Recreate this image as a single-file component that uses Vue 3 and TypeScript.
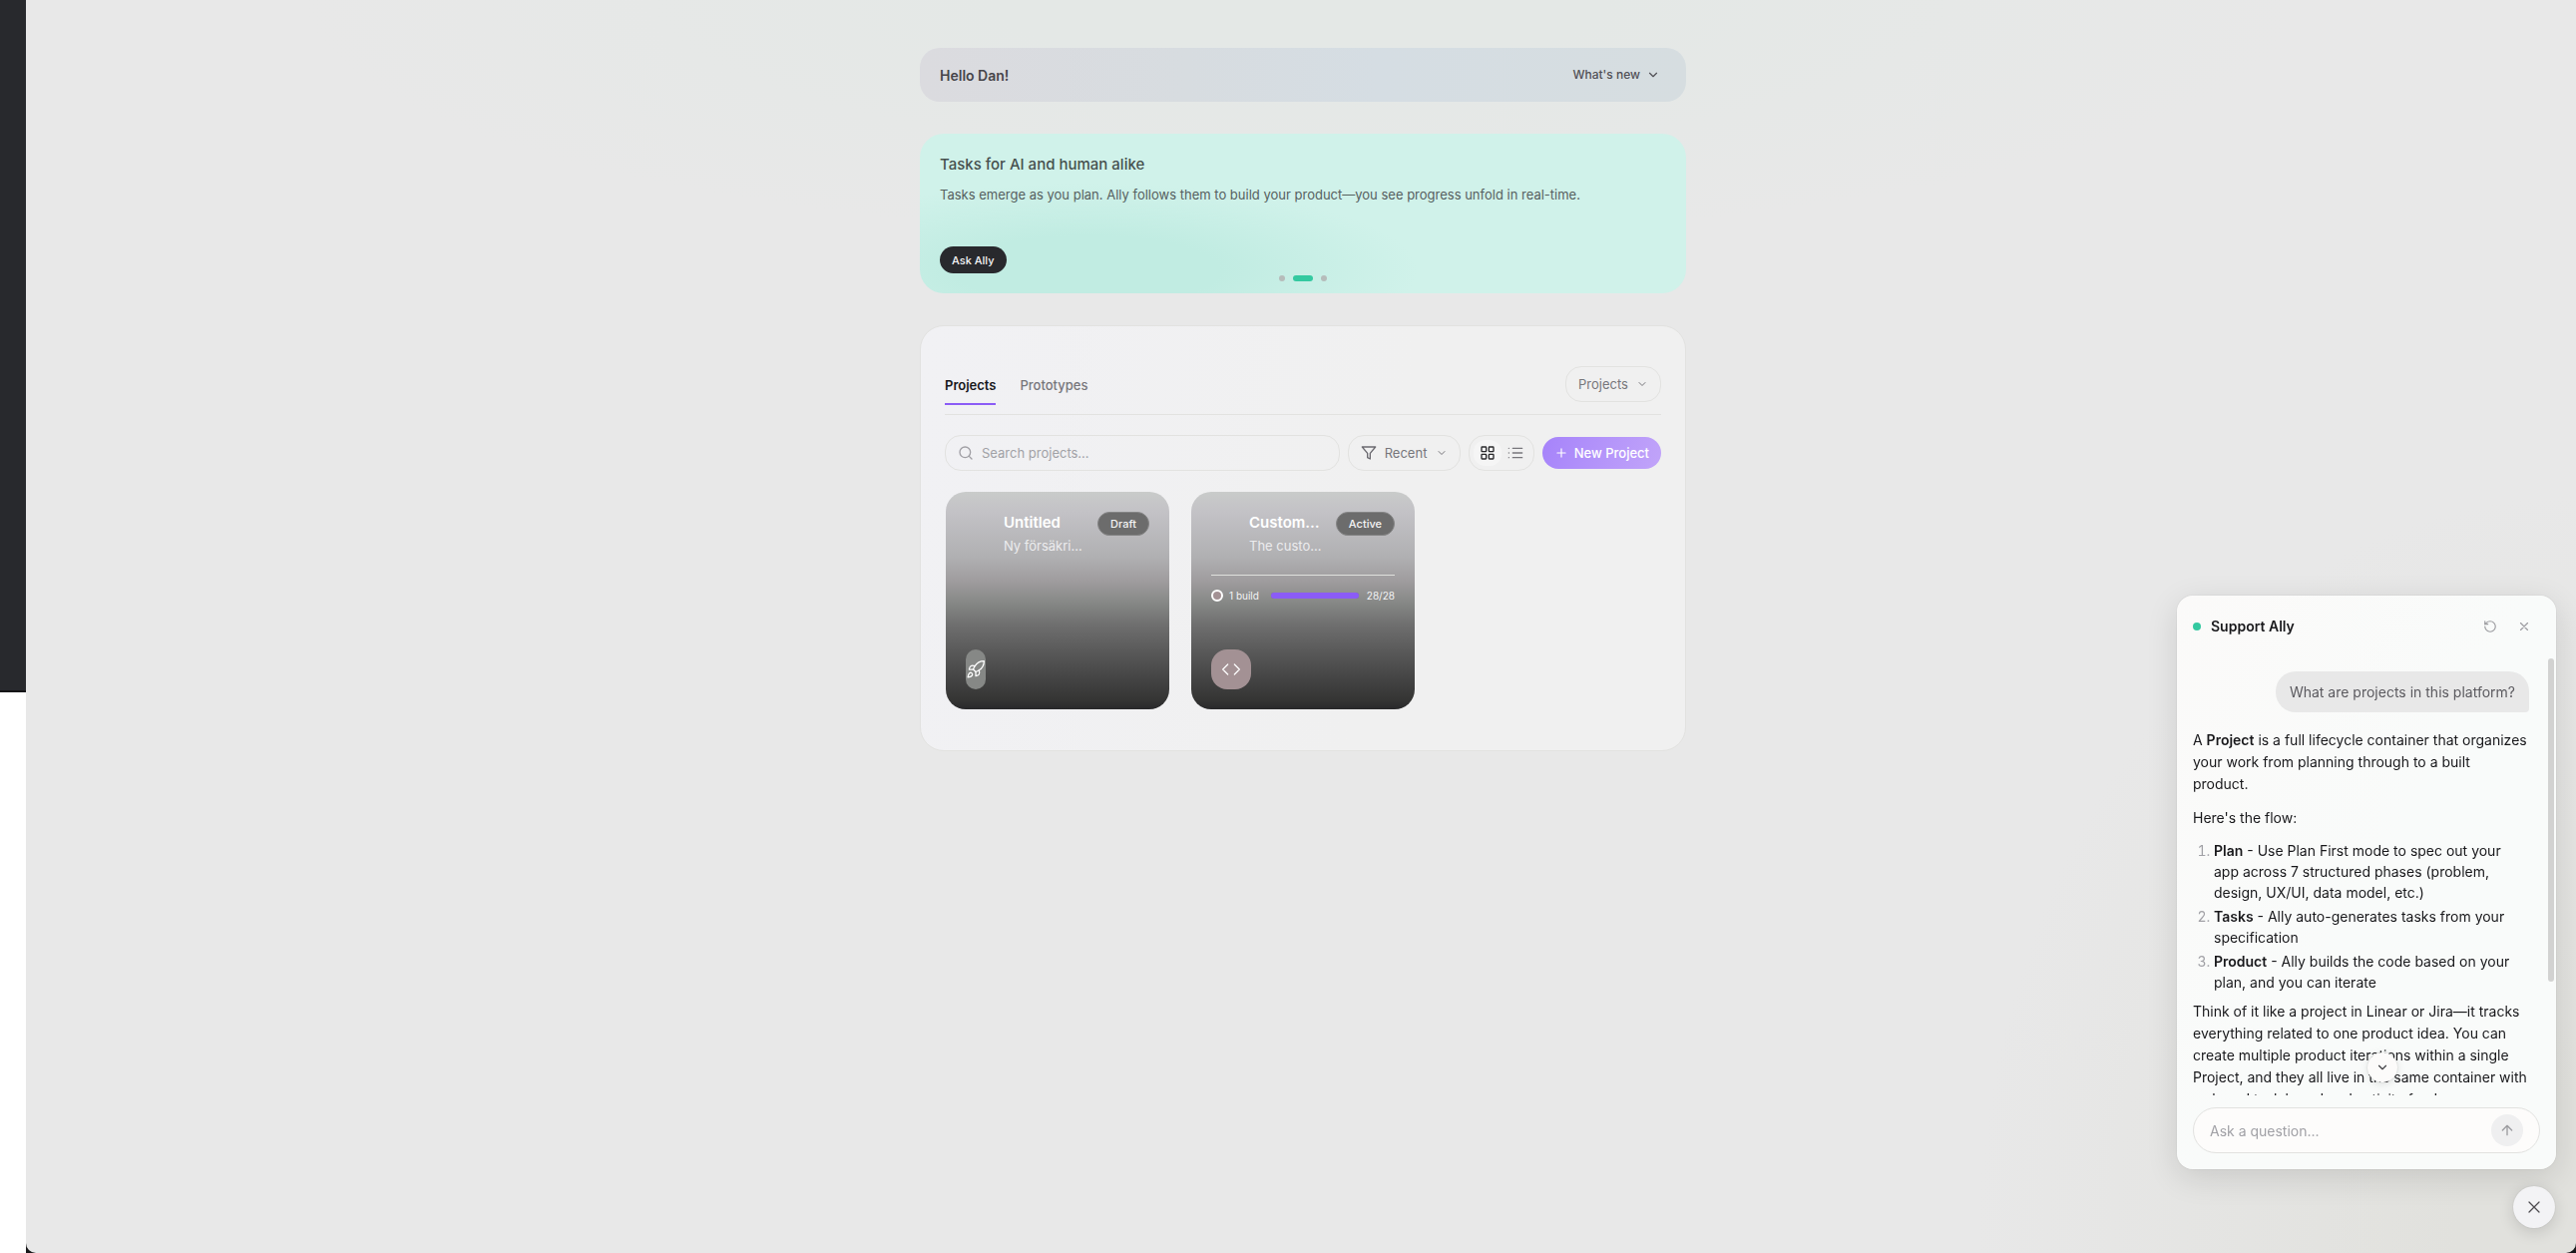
<script setup lang="ts">
import { ref } from 'vue'

interface Project {
  title: string
  summary: string
  status: string
  icon: 'rocket' | 'code'
  builds?: string
  done?: number
  total?: number
}

const projects: Project[] = [
  { title: 'Untitled', summary: 'Ny försäkring', status: 'Draft', icon: 'rocket' },
  {
    title: 'Customer portal',
    summary: 'The customer portal',
    status: 'Active',
    icon: 'code',
    builds: '1 build',
    done: 28,
    total: 28,
  },
]

const steps = [
  { name: 'Plan', text: 'Use Plan First mode to spec out your app across 7 structured phases (problem, design, UX/UI, data model, etc.)' },
  { name: 'Tasks', text: 'Ally auto-generates tasks from your specification' },
  { name: 'Product', text: 'Ally builds the code based on your plan, and you can iterate' },
]

const search = ref('')
const question = ref('')
const slide = ref(1)
</script>

<template>
  <div class="shell">
    <aside class="rail"><div class="rail-dark"></div></aside>
    <div class="frame">
      <main class="main">
        <div class="column">
          <header class="hello">
            <h1>Hello Dan!</h1>
            <button type="button" class="whats-new">
              What's new
              <svg class="i14" viewBox="0 0 24 24"><path d="m6 9 6 6 6-6" /></svg>
            </button>
          </header>

          <section class="banner">
            <h2>Tasks for AI and human alike</h2>
            <p>Tasks emerge as you plan. Ally follows them to build your product—you see progress unfold in real-time.</p>
            <button type="button" class="ask">Ask Ally</button>
            <div class="dots">
              <button
                v-for="n in 3"
                :key="n"
                type="button"
                class="dot"
                :class="{ on: slide === n - 1 }"
                :aria-label="`Slide ${n}`"
                @click="slide = n - 1"
              ></button>
            </div>
          </section>

          <section class="panel">
            <div class="tabs-row">
              <nav class="tabs">
                <button type="button" class="tab active">Projects</button>
                <button type="button" class="tab">Prototypes</button>
              </nav>
              <div class="pick kind">
                <select aria-label="Item kind">
                  <option>Projects</option>
                </select>
                <svg class="i12" viewBox="0 0 24 24"><path d="m6 9 6 6 6-6" /></svg>
              </div>
            </div>

            <div class="tools">
              <label class="search">
                <svg class="i16" viewBox="0 0 24 24"><circle cx="11" cy="11" r="8" /><path d="m21 21-4.3-4.3" /></svg>
                <input v-model="search" type="text" placeholder="Search projects..." aria-label="Search projects" />
              </label>
              <div class="pick sort">
                <svg class="i16 funnel" viewBox="0 0 24 24"><path d="M22 3H2l8 9.46V19l4 2v-8.54L22 3z" /></svg>
                <select aria-label="Sort order">
                  <option>Recent</option>
                </select>
                <svg class="i12" viewBox="0 0 24 24"><path d="m6 9 6 6 6-6" /></svg>
              </div>
              <div class="view">
                <button type="button" class="on" aria-label="Grid view">
                  <svg class="i16" viewBox="0 0 24 24">
                    <rect x="3" y="3" width="7" height="7" rx="1" /><rect x="14" y="3" width="7" height="7" rx="1" />
                    <rect x="14" y="14" width="7" height="7" rx="1" /><rect x="3" y="14" width="7" height="7" rx="1" />
                  </svg>
                </button>
                <button type="button" aria-label="List view">
                  <svg class="i16" viewBox="0 0 24 24">
                    <path d="M8 5h14M8 12h14M8 19h14M2 5h.01M2 12h.01M2 19h.01" />
                  </svg>
                </button>
              </div>
              <button type="button" class="new">
                <svg class="i14" viewBox="0 0 24 24"><path d="M5 12h14M12 5v14" /></svg>
                New Project
              </button>
            </div>

            <div class="grid">
              <article v-for="p in projects" :key="p.title" class="card">
                <div class="card-top">
                  <div class="card-text">
                    <h3>{{ p.title }}</h3>
                    <p>{{ p.summary }}</p>
                  </div>
                  <span class="status">{{ p.status }}</span>
                </div>
                <div v-if="p.total && p.done" class="progress">
                  <span class="ring"></span>
                  <span>{{ p.builds }}</span>
                  <span class="bar"><span :style="{ width: (p.done / p.total) * 100 + '%' }"></span></span>
                  <span>{{ p.done }}/{{ p.total }}</span>
                </div>
                <div class="badge" :class="p.icon">
                  <svg v-if="p.icon === 'rocket'" class="i20" viewBox="0 0 24 24">
                    <path d="M4.5 16.5c-1.5 1.26-2 5-2 5s3.74-.5 5-2c.71-.84.7-2.13-.09-2.91a2.18 2.18 0 0 0-2.91-.09z" />
                    <path d="m12 15-3-3a22 22 0 0 1 2-3.95A12.88 12.88 0 0 1 22 2c0 2.72-.78 7.5-6 11a22.35 22.35 0 0 1-4 2z" />
                    <path d="M9 12H4s.55-3.03 2-4c1.62-1.08 5 0 5 0" />
                    <path d="M12 15v5s3.03-.55 4-2c1.08-1.62 0-5 0-5" />
                  </svg>
                  <svg v-else class="i20" viewBox="0 0 24 24"><path d="m16 18 6-6-6-6M8 6l-6 6 6 6" /></svg>
                </div>
              </article>
            </div>
          </section>
        </div>
      </main>
    </div>

    <section class="chat" aria-label="Support Ally">
      <header class="chat-head">
        <span class="online"></span>
        <h2>Support Ally</h2>
        <button type="button" aria-label="Restart conversation">
          <svg class="i14" viewBox="0 0 24 24"><path d="M3 12a9 9 0 1 0 9-9 9.75 9.75 0 0 0-6.74 2.74L3 8" /><path d="M3 3v5h5" /></svg>
        </button>
        <button type="button" aria-label="Close">
          <svg class="i14" viewBox="0 0 24 24"><path d="M18 6 6 18M6 6l12 12" /></svg>
        </button>
      </header>
      <div class="log-wrap">
        <div class="log">
          <p class="bubble">What are projects in this platform?</p>
          <p>A <strong>Project</strong> is a full lifecycle container that organizes your work from planning through to a built product.</p>
          <p>Here's the flow:</p>
          <ol>
            <li v-for="s in steps" :key="s.name"><strong>{{ s.name }}</strong> - {{ s.text }}</li>
          </ol>
          <p>
            Think of it like a project in Linear or Jira—it tracks everything related to one product idea. You can create
            multiple product iterations within a single Project, and they all live in the same container with a shared task
            board and activity feed.
          </p>
        </div>
        <span class="thumb"></span>
        <button type="button" class="down" aria-label="Scroll to latest">
          <svg class="i14" viewBox="0 0 24 24"><path d="m6 9 6 6 6-6" /></svg>
        </button>
      </div>
      <form class="compose" @submit.prevent>
        <input v-model="question" type="text" placeholder="Ask a question..." aria-label="Ask a question" />
        <button type="submit" aria-label="Send">
          <svg class="i16" viewBox="0 0 24 24"><path d="m5 12 7-7 7 7M12 19V5" /></svg>
        </button>
      </form>
    </section>

    <button type="button" class="fab" aria-label="Close support">
      <svg class="i20" viewBox="0 0 24 24"><path d="M18 6 6 18M6 6l12 12" /></svg>
    </button>
  </div>
</template>

<style>
body {
  margin: 0;
  background: #fff;
}
</style>

<style scoped>
* {
  box-sizing: border-box;
}
.shell {
  display: flex;
  min-height: 100vh;
  font-family: Inter, 'Liberation Sans', sans-serif;
  font-size: 14px;
  color: #18181b;
}
h1, h2, h3, p, ol {
  margin: 0;
}
button, input, select {
  font: inherit;
  color: inherit;
  border: 0;
  margin: 0;
  padding: 0;
  background: none;
  outline: none;
}
button {
  display: inline-flex;
  align-items: center;
  justify-content: center;
  cursor: pointer;
}
svg {
  flex: none;
  fill: none;
  stroke: currentColor;
  stroke-width: 2;
  stroke-linecap: round;
  stroke-linejoin: round;
}
.i12 { width: 12px; height: 12px; }
.i14 { width: 14px; height: 14px; }
.i16 { width: 16px; height: 16px; }
.i20 { width: 20px; height: 20px; }

.rail {
  width: 26px;
  flex: none;
}
.rail-dark {
  height: 694px;
  background: #28292d;
  border-bottom: 2px solid #151517;
}
.frame {
  flex: 1;
  display: flex;
  background: #18181a;
}
.main {
  flex: 1;
  padding: 48px 0 32px 4px;
  border-radius: 0 0 10px 10px;
  background:
    radial-gradient(ellipse 1000px 240px at 50% 0, #e4e8e6 30%, transparent),
    radial-gradient(ellipse 600px 760px at 100% 100%, #e1e1dd 20%, transparent),
    #e8e8e8;
}
.column {
  width: 100%;
  max-width: 768px;
  margin: 0 auto;
  display: flex;
  flex-direction: column;
  gap: 32px;
}

.hello {
  height: 54px;
  padding: 0 20px;
  display: flex;
  align-items: center;
  justify-content: space-between;
  border-radius: 20px;
  background: linear-gradient(90deg, #dbdbdf, #d7dce0 35%, #d5dde3 60%, #d6dde0);
}
.hello h1 {
  padding-top: 2px;
  font-size: 14px;
  line-height: 20px;
  font-weight: 600;
  color: #46454a;
}
.whats-new {
  gap: 6px;
  padding: 0 6px;
  font-size: 12px;
  line-height: 16px;
  font-weight: 500;
  color: #515056;
}

.banner {
  position: relative;
  height: 160px;
  padding: 20px;
  display: flex;
  flex-direction: column;
  align-items: flex-start;
  border-radius: 24px;
  background: radial-gradient(ellipse 330px 88px at 22% 86%, #c1ece2 40%, #d0f2ea);
}
.banner h2 {
  font-size: 15px;
  line-height: 22px;
  font-weight: 500;
  color: #46504e;
}
.banner p {
  margin-top: 8px;
  font-size: 13px;
  line-height: 22px;
  color: #56605f;
}
.ask {
  margin-top: auto;
  height: 27px;
  padding: 0 12px;
  border-radius: 14px;
  background: #28292d;
  color: #f4f4f5;
  font-size: 11px;
  font-weight: 500;
}
.dots {
  position: absolute;
  left: 0;
  right: 0;
  bottom: 12px;
  display: flex;
  justify-content: center;
  gap: 8px;
}
.dot {
  width: 6px;
  height: 6px;
  border-radius: 3px;
  background: #b6bcba;
}
.dot.on {
  width: 20px;
  background: #34c9a0;
}

.panel {
  padding: 40px 24px 41px;
  border: 1px solid #e2e2e0;
  border-radius: 24px;
  background: linear-gradient(100deg, #f1f1f4, #f0f0f0 60%);
}
.tabs-row {
  display: flex;
  justify-content: space-between;
  height: 49px;
  border-bottom: 1px solid #e2e2e0;
}
.tabs {
  display: flex;
  gap: 24px;
}
.tab {
  height: 39px;
  border-bottom: 2px solid transparent;
  font-size: 13px;
  font-weight: 500;
  color: #77767b;
}
.tab.active {
  color: #18181b;
  font-weight: 600;
  border-color: #8b5cf6;
}
.pick {
  height: 36px;
  padding: 0 12px;
  display: flex;
  align-items: center;
  gap: 8px;
  border: 1px solid #e2e2e0;
  border-radius: 16px;
  font-size: 13px;
  color: #77767b;
}
.pick select {
  appearance: none;
}
.funnel {
  color: #6b6a70;
}
.tools {
  display: flex;
  align-items: center;
  gap: 8px;
  margin-top: 20px;
}
.search {
  flex: 1;
  height: 36px;
  padding: 0 12px;
  display: flex;
  align-items: center;
  gap: 8px;
  border: 1px solid #e2e2e0;
  border-radius: 16px;
  color: #a09fa4;
}
.search input {
  flex: 1;
  min-width: 0;
  font-size: 13px;
}
::placeholder {
  color: #a1a1a6;
  opacity: 1;
}
.view {
  height: 36px;
  padding: 4px;
  display: flex;
  border: 1px solid #e2e2e0;
  border-radius: 16px;
  color: #77767b;
}
.view button {
  width: 28px;
  border-radius: 12px;
}
.view .on {
  background: #f5f5f5;
  color: #28282b;
}
.new {
  height: 32px;
  padding: 0 12px;
  gap: 6px;
  border-radius: 16px;
  background: linear-gradient(110deg, #a683fa, #b191fa 40%, #c1a4f9);
  color: #fff;
  font-size: 13px;
  font-weight: 500;
}

.grid {
  margin-top: 21px;
  display: grid;
  grid-template-columns: repeat(3, minmax(0, 1fr));
  gap: 20px;
}
.card {
  height: 218px;
  margin: 0 1px;
  padding: 20px;
  display: flex;
  flex-direction: column;
  border-radius: 20px;
  color: #f4f4f5;
  background: linear-gradient(#c9cbca, #c3c2c6 9%, #b0b0b2 30%, #9f9c9e 41%, #868886 51%, #6f6f6f 61%, #585858 74%, #444 86%, #343433 96%, #28282a);
}
.card-top {
  display: flex;
  align-items: flex-start;
  gap: 14px;
  padding-left: 38px;
}
.card-text {
  flex: 1;
  min-width: 0;
}
.card h3, .card p {
  overflow: hidden;
  white-space: nowrap;
  text-overflow: ellipsis;
}
.card h3 {
  font-size: 15px;
  line-height: 22px;
  font-weight: 600;
  color: #fff;
}
.card p {
  margin-top: 2px;
  font-size: 13px;
  line-height: 20px;
  color: #ececee;
}
.status {
  height: 24px;
  padding: 0 12px;
  border: 1px solid #858585;
  border-radius: 12px;
  background: #6c6c6c;
  font-size: 11px;
  line-height: 22px;
  font-weight: 500;
}
.progress {
  margin-top: 19px;
  padding-top: 12px;
  display: flex;
  align-items: center;
  border-top: 1px solid #dfe0dc;
  font-size: 10px;
  line-height: 16px;
}
.ring {
  width: 12px;
  height: 12px;
  margin-right: 6px;
  border: 2px solid #fff;
  border-radius: 50%;
  background: #a39194;
}
.bar {
  flex: 1;
  height: 6px;
  margin: 0 8px 0 12px;
  border-radius: 3px;
  background: #777;
}
.bar span {
  display: block;
  height: 100%;
  border-radius: 3px;
  background: #8b5cf6;
}
.badge {
  width: 40px;
  height: 40px;
  margin-top: auto;
  display: flex;
  align-items: center;
  justify-content: center;
  border-radius: 16px;
  background: #a39194;
  color: #fff;
}
.badge svg {
  stroke-width: 1.5;
}
.badge.rocket {
  width: 20px;
  border-radius: 10px;
  background: #868886;
}

.chat {
  position: fixed;
  right: 20px;
  bottom: 84px;
  width: 380px;
  height: 575px;
  display: flex;
  flex-direction: column;
  border-radius: 16px;
  background: linear-gradient(120deg, #fbfaf9, #f9fbfa 50%);
  box-shadow: 0 8px 32px rgba(0, 0, 0, 0.12), 0 0 2px rgba(0, 0, 0, 0.12);
}
.chat-head {
  height: 62px;
  padding: 0 20px 0 16px;
  display: flex;
  align-items: center;
}
.online {
  width: 8px;
  height: 8px;
  border-radius: 50%;
  background: #34c9a0;
}
.chat-head h2 {
  flex: 1;
  margin-left: 10px;
  font-size: 14px;
  line-height: 20px;
  font-weight: 600;
}
.chat-head button {
  width: 24px;
  height: 24px;
  margin-left: 10px;
  color: #9b9b9f;
}
.log-wrap {
  position: relative;
  flex: 1;
  min-height: 0;
}
.log {
  height: 100%;
  padding: 14px 27px 0 16px;
  overflow: hidden;
  font-size: 14px;
  line-height: 22px;
}
.log p + p {
  margin-top: 12px;
}
.log .bubble {
  width: fit-content;
  margin: 0 0 17px auto;
  padding: 10px 14px;
  border-radius: 20px 20px 4px 20px;
  background: #e8e8e8;
  line-height: 21px;
  color: #5b5a5f;
}
.log strong {
  font-weight: 600;
}
.log .bubble + p {
  margin-top: 0;
}
.log ol {
  margin: 11px 0 8px;
  padding-left: 21px;
  line-height: 21px;
}
.log li + li {
  margin-top: 3px;
}
.log li::marker {
  color: #a1a1a6;
}
.thumb {
  position: absolute;
  right: 2px;
  top: 1px;
  width: 6px;
  height: 324px;
  border-radius: 3px;
  background: #d2d2d1;
}
.down {
  position: absolute;
  left: 191px;
  bottom: 13px;
  width: 30px;
  height: 30px;
  border-radius: 50%;
  background: #fcfbfa;
  color: #3d3c40;
  box-shadow: 0 2px 10px rgba(0, 0, 0, 0.1), 0 0 2px rgba(0, 0, 0, 0.16);
}
.compose {
  height: 46px;
  margin: 12px 16px 16px;
  padding: 0 16px;
  display: flex;
  align-items: center;
  border: 1px solid #e2e2e0;
  border-radius: 23px;
  background: #fdfcfb;
}
.compose input {
  flex: 1;
  min-width: 0;
}
.compose button {
  width: 32px;
  height: 32px;
  border-radius: 50%;
  background: #efeff0;
  color: #9b9b9f;
}
.fab {
  position: fixed;
  right: 21px;
  bottom: 25px;
  width: 42px;
  height: 42px;
  border-radius: 50%;
  background: #f3f3f5;
  color: #4c4a4e;
  box-shadow: 0 4px 16px rgba(0, 0, 0, 0.14), 0 0 2px rgba(0, 0, 0, 0.12);
}
.fab svg {
  stroke-width: 1.5;
}
</style>
